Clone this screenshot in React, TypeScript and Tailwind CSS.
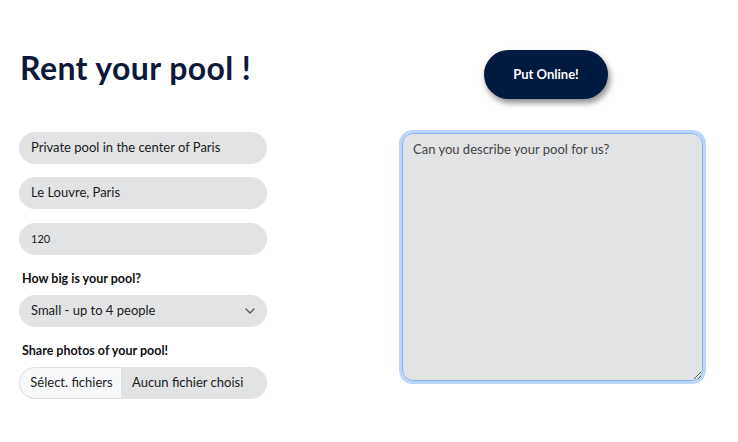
import React from "react";

export default function App() {
  const font = { fontFamily: "Lato, 'Noto Sans', sans-serif" };
  return (
    <div className="w-[738px] h-[442px] bg-white flex pt-[50px]" style={font}>
      <div className="ml-[19px] w-[248px] flex flex-col">
        <h1 className="ml-[1px] text-[32px] leading-[36px] font-bold text-[#0b1a3b] tracking-[0.4px]">
          Rent your pool !
        </h1>
        <div className="mt-[46px] flex flex-col">
          <div className="h-[32px] rounded-[16px] bg-[#e2e3e5] flex items-center px-3 text-[13px] text-[#1a1a1a]">
            Private pool in the center of Paris
          </div>
          <div className="mt-[13px] h-[32px] rounded-[16px] bg-[#e2e3e5] flex items-center px-3 text-[13px] text-[#1a1a1a]">
            Le Louvre, Paris
          </div>
          <div className="mt-[14px] h-[32px] rounded-[16px] bg-[#e2e3e5] flex items-center px-3 text-[11px] text-[#1a1a1a]">
            120
          </div>
          <div className="mt-[15px] ml-[3px] text-[12.5px] font-bold text-[#111]">How big is your pool?</div>
          <div className="mt-[6px] h-[32px] rounded-[16px] bg-[#e2e3e5] flex items-center justify-between pl-3 pr-[12px] text-[13px] text-[#1a1a1a]">
            <span>Small - up to 4 people</span>
            <svg width="10" height="6" viewBox="0 0 10 6" fill="none">
              <path d="M1 1l4 4 4-4" stroke="#555" strokeWidth="1.3" strokeLinecap="round" strokeLinejoin="round" />
            </svg>
          </div>
          <div className="mt-[15px] ml-[3px] text-[12.5px] font-bold text-[#111]">Share photos of your pool!</div>
          <div className="mt-[6px] h-[32px] rounded-[16px] bg-[#e2e3e5] flex items-stretch text-[13px] text-[#1a1a1a] overflow-hidden">
            <div className="w-[103px] bg-[#f8f9fa] border border-[#e0e0e0] rounded-l-[16px] flex items-center justify-center pl-[2px]">
              Sélect. fichiers
            </div>
            <div className="flex items-center pl-[10px]">Aucun fichier choisi</div>
          </div>
        </div>
      </div>
      <div className="ml-[132px] w-[307px] flex flex-col">
        <button className="ml-[85px] w-[124px] h-[49px] rounded-full bg-[#001a40] text-white font-bold text-[13px] shadow-[2px_4px_6px_rgba(0,0,0,0.45)]">
          Put Online!
        </button>
        <div className="mt-[31px] h-[254px] rounded-[14px] border-[3px] border-[#bcd5fb] flex">
          <textarea
            placeholder="Can you describe your pool for us?"
            className="flex-1 rounded-[11px] border border-[#88b1ee] bg-[#e2e3e5] px-[10px] py-[6px] text-[13px] text-[#222] placeholder:text-[#444] outline-none"
            style={font}
          />
        </div>
      </div>
    </div>
  );
}
